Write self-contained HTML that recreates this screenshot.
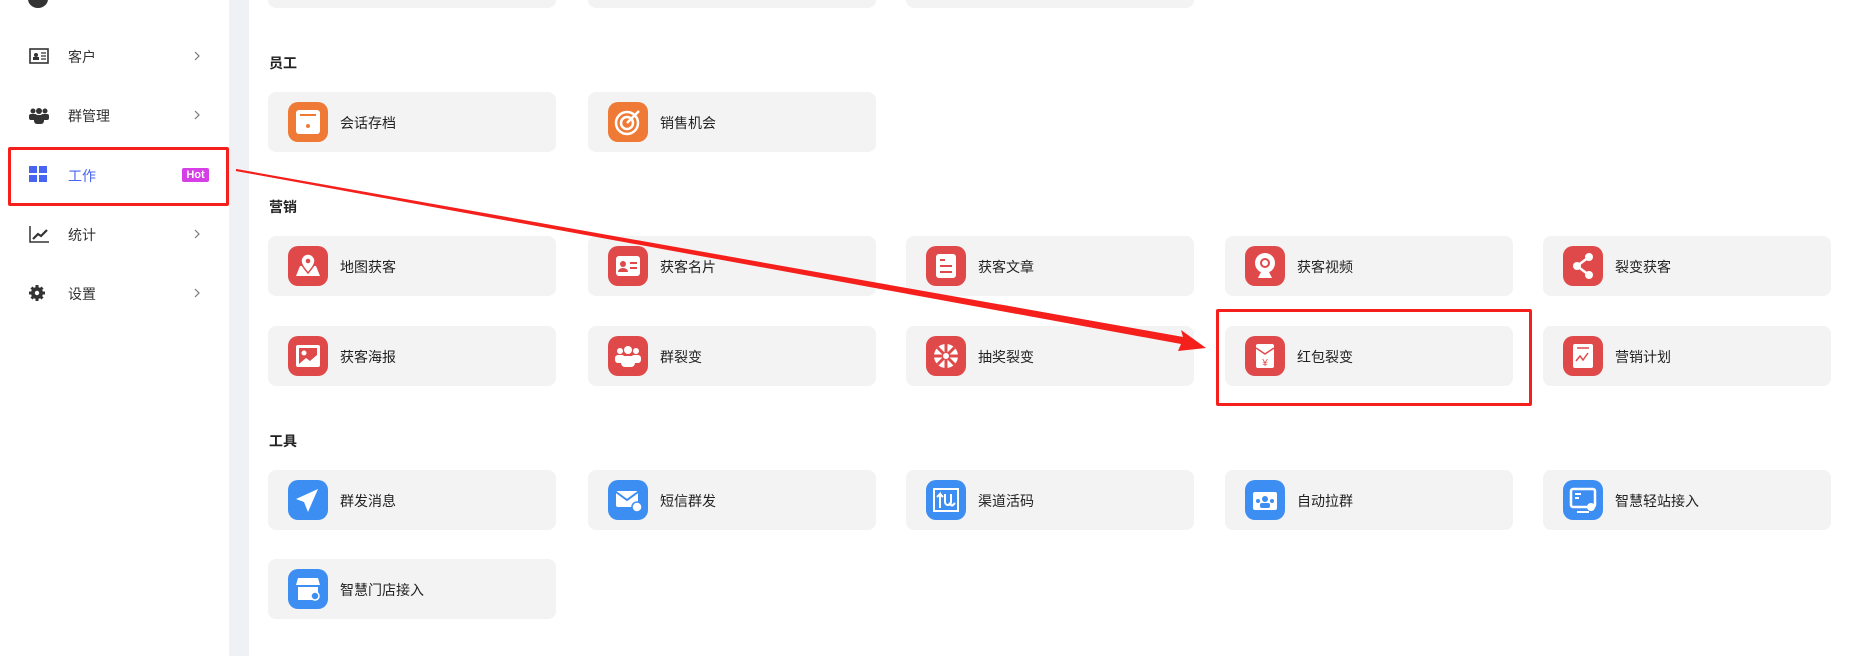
<!DOCTYPE html>
<html><head><meta charset="utf-8"><style>
*{margin:0;padding:0;box-sizing:border-box}
body{width:1870px;height:656px;overflow:hidden;background:#fff;position:relative;font-family:"Liberation Sans","Noto Sans CJK SC",sans-serif;color:#222}
.side{position:absolute;left:0;top:0;width:229px;height:656px;background:#fff}
.strip{position:absolute;left:229px;top:0;width:20px;height:656px;background:#f0f1f5}
.nav{position:absolute;left:0;width:229px;height:30px;font-size:14px;color:#333}
.nav .ic{position:absolute;left:29px;top:6px;width:20px;height:18px}
.nav .t{position:absolute;left:68px;top:6px}
.nav .ch{position:absolute;left:194px;top:10px;width:6px;height:10px}
.lbl{position:absolute;left:269px;font-size:14px;font-weight:bold;color:#222}
.card{position:absolute;width:288px;height:60px;background:#f3f3f3;border-radius:8px}
.card .i{position:absolute;left:20px;top:10px;width:40px;height:40px;border-radius:10px}
.card .t{position:absolute;left:72px;top:21px;font-size:14px;color:#222}
.o{background:#ee7a36}.r{background:#e0494a}.b{background:#3d8ef3}
.i svg{position:absolute;left:0;top:0;width:40px;height:40px}
</style></head><body>
<div class="side"></div><div class="strip"></div>
<div style="position:absolute;left:28px;top:-10px;width:20px;height:18px;border-radius:50%;background:#333"></div>
<div class="nav" style="top:41px"><svg class="ic" viewBox="0 0 20 18"><rect x="1" y="2" width="18" height="14" fill="none" stroke="#333" stroke-width="1.6"/><circle cx="7" cy="8" r="2" fill="#333"/><rect x="4" y="10" width="6" height="3" fill="#333"/><path d="M12 6h5M12 9h5M12 12h5" stroke="#333" stroke-width="1.3"/></svg><span class="t">客户</span><svg class="ch" viewBox="0 0 6 10"><path d="M1 1l4 4-4 4" fill="none" stroke="#777" stroke-width="1.2"/></svg></div>
<div class="nav" style="top:100px"><svg class="ic" viewBox="0 0 20 18"><circle cx="4" cy="5" r="2.5" fill="#333"/><circle cx="16" cy="5" r="2.5" fill="#333"/><circle cx="10" cy="5" r="3" fill="#333"/><rect x="0" y="8" width="8" height="6" rx="2" fill="#333"/><rect x="12" y="8" width="8" height="6" rx="2" fill="#333"/><rect x="5" y="9" width="10" height="9" rx="3" fill="#333"/></svg><span class="t">群管理</span><svg class="ch" viewBox="0 0 6 10"><path d="M1 1l4 4-4 4" fill="none" stroke="#777" stroke-width="1.2"/></svg></div>
<div class="nav" style="top:160px"><svg class="ic" viewBox="0 0 20 18"><rect x="0" y="0" width="8" height="7" fill="#4765f0"/><rect x="10" y="0" width="8" height="7" fill="#4765f0"/><rect x="0" y="9" width="8" height="7" fill="#4765f0"/><rect x="10" y="9" width="8" height="7" fill="#4765f0"/></svg><span class="t" style="color:#4765f0">工作</span><span style="position:absolute;left:182px;top:8px;width:27px;height:14px;background:#d63ee6;color:#fff;font-size:11px;font-weight:bold;text-align:center;line-height:14px;border-radius:2px">Hot</span></div>
<div style="position:absolute;left:8px;top:147px;width:221px;height:59px;border:3px solid #f5201c;border-radius:2px"></div>
<div class="nav" style="top:219px"><svg class="ic" viewBox="0 0 20 18"><path d="M1 1v16h19" fill="none" stroke="#333" stroke-width="1.5"/><path d="M4 14l5-5 3 2 6-6" fill="none" stroke="#333" stroke-width="2.2"/></svg><span class="t">统计</span><svg class="ch" viewBox="0 0 6 10"><path d="M1 1l4 4-4 4" fill="none" stroke="#777" stroke-width="1.2"/></svg></div>
<div class="nav" style="top:278px"><svg class="ic" viewBox="0 0 20 18"><circle cx="8" cy="9" r="6" fill="#333"/><g stroke="#333" stroke-width="3"><path d="M8 1v16M0 9h16M2.5 3.5l11 11M13.5 3.5l-11 11"/></g><circle cx="8" cy="9" r="2.2" fill="#fff"/></svg><span class="t">设置</span><svg class="ch" viewBox="0 0 6 10"><path d="M1 1l4 4-4 4" fill="none" stroke="#777" stroke-width="1.2"/></svg></div>

<div class="card" style="left:268px;top:-52px"></div><div class="card" style="left:588px;top:-52px"></div><div class="card" style="left:906px;top:-52px"></div>

<div class="lbl" style="top:53px">员工</div>
<div class="card" style="left:268px;top:92px"><div class="i o"><svg viewBox="0 0 40 40"><rect x="8" y="8" width="24" height="24" rx="3" fill="#fff"/><path d="M12 13h16" stroke="#ee7a36" stroke-width="2"/><circle cx="20" cy="24" r="2" fill="#ee7a36"/></svg></div><span class="t">会话存档</span></div>
<div class="card" style="left:588px;top:92px"><div class="i o"><svg viewBox="0 0 40 40"><circle cx="19" cy="21" r="11" fill="none" stroke="#fff" stroke-width="2.5"/><circle cx="19" cy="21" r="6" fill="none" stroke="#fff" stroke-width="2.5"/><path d="M19 21l12-12" stroke="#fff" stroke-width="2.5"/></svg></div><span class="t">销售机会</span></div>

<div class="lbl" style="top:197px">营销</div>
<div class="card" style="left:268px;top:236px"><div class="i r"><svg viewBox="0 0 40 40"><path d="M8 30l4-10h16l4 10z" fill="#fff"/><path d="M20 27c-5-6-7-9-7-12a7 7 0 0114 0c0 3-2 6-7 12z" fill="#fff" stroke="#e0494a" stroke-width="1.5"/><circle cx="20" cy="15" r="2.3" fill="#e0494a"/></svg></div><span class="t">地图获客</span></div>
<div class="card" style="left:588px;top:236px"><div class="i r"><svg viewBox="0 0 40 40"><rect x="8" y="10" width="24" height="20" rx="3" fill="#fff"/><circle cx="15" cy="18" r="3" fill="#e0494a"/><path d="M10 26a5 4 0 0110 0z" fill="#e0494a"/><path d="M22 17h7M22 22h7" stroke="#e0494a" stroke-width="2"/></svg></div><span class="t">获客名片</span></div>
<div class="card" style="left:906px;top:236px"><div class="i r"><svg viewBox="0 0 40 40"><rect x="10" y="8" width="20" height="24" rx="3" fill="#fff"/><path d="M14 14h5M14 20h12M14 26h12" stroke="#e0494a" stroke-width="2"/></svg></div><span class="t">获客文章</span></div>
<div class="card" style="left:1225px;top:236px"><div class="i r"><svg viewBox="0 0 40 40"><circle cx="20" cy="17" r="10" fill="#fff"/><circle cx="20" cy="17" r="5" fill="#e0494a"/><circle cx="20" cy="17" r="3" fill="#fff"/><path d="M13 32l3-6h8l3 6z" fill="#fff"/></svg></div><span class="t">获客视频</span></div>
<div class="card" style="left:1543px;top:236px"><div class="i r"><svg viewBox="0 0 40 40"><path d="M26 11L14 20l12 9" stroke="#fff" stroke-width="2.5" fill="none"/><circle cx="26" cy="11" r="4" fill="#fff"/><circle cx="14" cy="20" r="4" fill="#fff"/><circle cx="26" cy="29" r="4" fill="#fff"/></svg></div><span class="t">裂变获客</span></div>

<div class="card" style="left:268px;top:326px"><div class="i r"><svg viewBox="0 0 40 40"><rect x="8" y="9" width="24" height="22" rx="2" fill="#fff"/><rect x="11" y="12" width="18" height="16" fill="#e0494a"/><circle cx="16" cy="17" r="2.5" fill="#fff"/><path d="M11 28l7-6 4 3 7-6v9z" fill="#fff"/></svg></div><span class="t">获客海报</span></div>
<div class="card" style="left:588px;top:326px"><div class="i r"><svg viewBox="0 0 40 40"><circle cx="12" cy="15" r="3" fill="#fff"/><circle cx="28" cy="15" r="3" fill="#fff"/><circle cx="20" cy="14" r="4" fill="#fff"/><rect x="7" y="19" width="10" height="8" rx="3" fill="#fff"/><rect x="23" y="19" width="10" height="8" rx="3" fill="#fff"/><rect x="13" y="20" width="14" height="11" rx="4" fill="#fff"/></svg></div><span class="t">群裂变</span></div>
<div class="card" style="left:906px;top:326px"><div class="i r"><svg viewBox="0 0 40 40"><circle cx="20" cy="20" r="12" fill="#fff"/><g stroke="#e0494a" stroke-width="3"><path d="M20 8v24M8 20h24M11.5 11.5l17 17M28.5 11.5l-17 17"/></g><circle cx="20" cy="20" r="3" fill="#fff"/></svg></div><span class="t">抽奖裂变</span></div>
<div class="card" style="left:1225px;top:326px"><div class="i r"><svg viewBox="0 0 40 40"><rect x="11" y="8" width="18" height="24" rx="2" fill="#fff"/><path d="M11 12l9 6 9-6" fill="none" stroke="#e0494a" stroke-width="1.5"/><text x="20" y="30" font-size="10" text-anchor="middle" fill="#e0494a" font-family="Liberation Sans">¥</text></svg></div><span class="t">红包裂变</span></div>
<div class="card" style="left:1543px;top:326px"><div class="i r"><svg viewBox="0 0 40 40"><rect x="10" y="8" width="20" height="24" rx="2" fill="#fff"/><path d="M14 12h12" stroke="#e0494a" stroke-width="1.5"/><path d="M13 25l4-5 3 4 5-7" fill="none" stroke="#e0494a" stroke-width="1.5"/></svg></div><span class="t">营销计划</span></div>

<div class="lbl" style="top:431px">工具</div>
<div class="card" style="left:268px;top:470px"><div class="i b"><svg viewBox="0 0 40 40"><path d="M30 9L8 19l8 3 4 10z" fill="#fff"/></svg></div><span class="t">群发消息</span></div>
<div class="card" style="left:588px;top:470px"><div class="i b"><svg viewBox="0 0 40 40"><rect x="8" y="11" width="22" height="16" rx="2" fill="#fff"/><path d="M8 12l11 8 11-8" fill="none" stroke="#3d8ef3" stroke-width="2"/><circle cx="29" cy="27" r="5" fill="#fff" stroke="#3d8ef3" stroke-width="1.5"/></svg></div><span class="t">短信群发</span></div>
<div class="card" style="left:906px;top:470px"><div class="i b"><svg viewBox="0 0 40 40"><rect x="8" y="9" width="24" height="22" fill="none" stroke="#fff" stroke-width="2"/><path d="M14 28V14l-3 3M14 14l3 3M19 14v8a3 3 0 006 0v-8M26 26l3-3M26 26l-3-3" fill="none" stroke="#fff" stroke-width="2"/></svg></div><span class="t">渠道活码</span></div>
<div class="card" style="left:1225px;top:470px"><div class="i b"><svg viewBox="0 0 40 40"><rect x="8" y="12" width="24" height="18" rx="2" fill="#fff"/><circle cx="20" cy="19" r="3" fill="#3d8ef3"/><circle cx="13" cy="21" r="2" fill="#3d8ef3"/><circle cx="27" cy="21" r="2" fill="#3d8ef3"/><rect x="15" y="23" width="10" height="5" rx="2" fill="#3d8ef3"/></svg></div><span class="t">自动拉群</span></div>
<div class="card" style="left:1543px;top:470px"><div class="i b"><svg viewBox="0 0 40 40"><rect x="8" y="9" width="24" height="18" rx="2" fill="none" stroke="#fff" stroke-width="2.5"/><path d="M12 14h6M12 18h4M14 32h12" stroke="#fff" stroke-width="2"/><circle cx="28" cy="27" r="4" fill="#fff"/></svg></div><span class="t">智慧轻站接入</span></div>
<div class="card" style="left:268px;top:559px"><div class="i b"><svg viewBox="0 0 40 40"><path d="M10 9h20l2 7H8z" fill="#fff"/><rect x="10" y="18" width="20" height="13" fill="#fff"/><circle cx="27" cy="27" r="4" fill="#3d8ef3" stroke="#fff" stroke-width="1.5"/></svg></div><span class="t">智慧门店接入</span></div>

<div style="position:absolute;left:1216px;top:309px;width:316px;height:97px;border:3px solid #f5201c;border-radius:2px"></div>
<svg style="position:absolute;left:0;top:0" width="1870" height="656"><polygon points="236,169 1183,337 1181,330 1206,348 1178,351 1181,344 236,171" fill="#f5201c"/><line x1="236" y1="170" x2="1185" y2="340" stroke="#f5201c" stroke-width="2"/><line x1="700" y1="253" x2="1185" y2="340" stroke="#f5201c" stroke-width="3"/><line x1="1000" y1="307" x2="1185" y2="340" stroke="#f5201c" stroke-width="5"/></svg>
</body></html>
